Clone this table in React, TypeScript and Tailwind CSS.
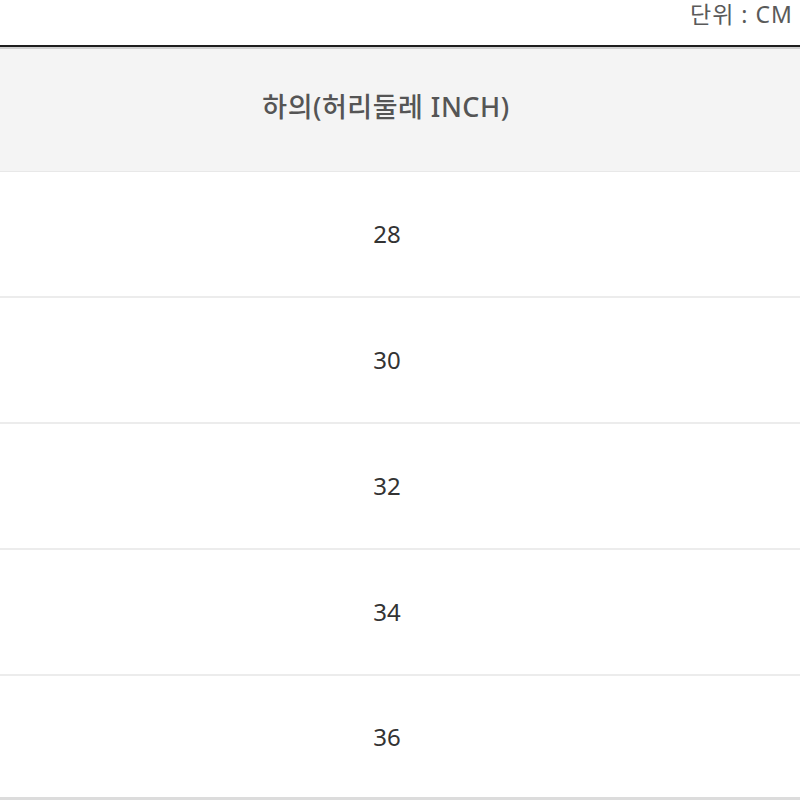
const sizes = ["28", "30", "32", "34", "36"];

export default function App() {
  return (
    <div className="w-[800px] h-[800px] overflow-hidden bg-white font-['Noto_Sans','Noto_Sans_CJK_KR',sans-serif]">
      <div className="h-[45px] pl-[690px] overflow-hidden whitespace-nowrap">
        <span className="text-[23px] text-[#5a5a5a] leading-[28px] tracking-[1px]">단위 : CM</span>
      </div>
      <div className="h-[2px] bg-[#1e1e1e]" />
      <div className="h-[2px] bg-[#cfcfcf]" />
      <div className="h-[123px] bg-[#f4f4f4] flex items-center justify-center border-b border-[#e8e8e8]">
        <span className="text-[27px] text-[#555] font-medium ml-[-28px] pb-[6px] tracking-[0.5px]">하의(허리둘레 INCH)</span>
      </div>
      {sizes.map((s, i) => (
        <div
          key={s}
          className={
            i === sizes.length - 1
              ? "h-[124px] flex items-center justify-center border-b-[3px] border-[#dcdcdc]"
              : "h-[126px] flex items-center justify-center border-b-2 border-[#ececec]"
          }
        >
          <span className="text-[24px] text-[#333] ml-[-26px]">{s}</span>
        </div>
      ))}
    </div>
  );
}
